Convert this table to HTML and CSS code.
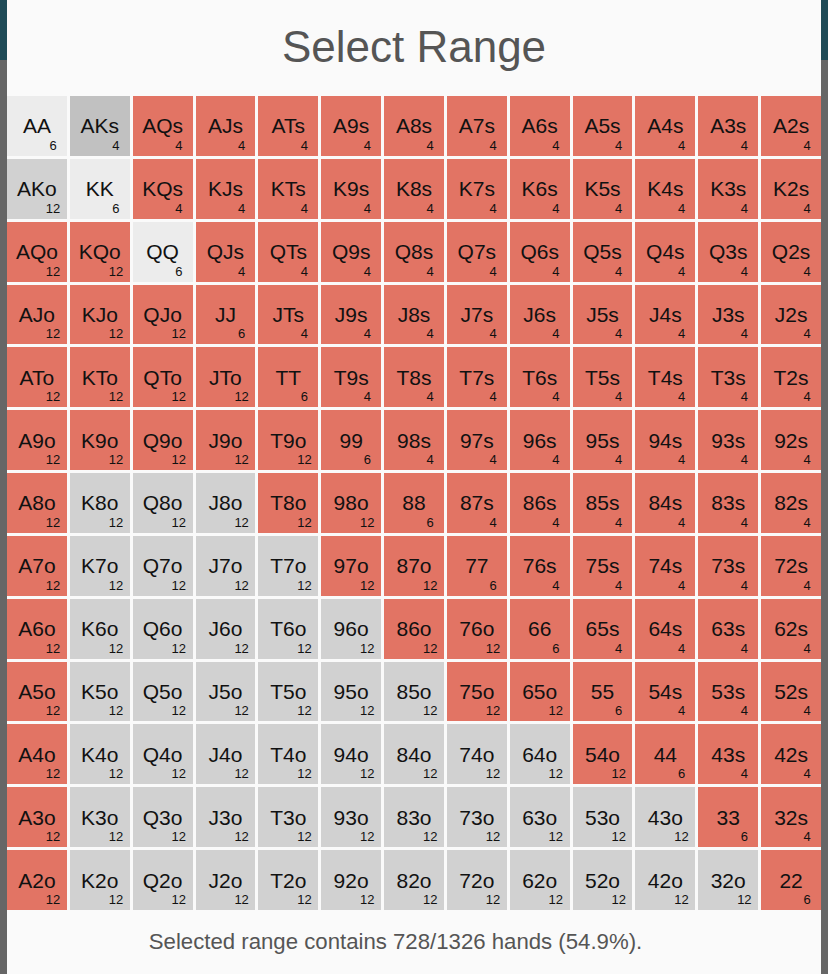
FILE: index.html
```html
<!DOCTYPE html>
<html>
<head>
<meta charset="utf-8">
<title>Select Range</title>
<link rel="stylesheet" href="styles.css">
</head>
<body>
<div class="screen">
  <div class="strip"><div class="strip-top"></div></div>
  <main class="modal">
    <h1 class="title">Select Range</h1>
    <div class="grid">
      <div class="cell p"><span class="h">AA</span><span class="n">6</span></div>
      <div class="cell s"><span class="h">AKs</span><span class="n">4</span></div>
      <div class="cell r"><span class="h">AQs</span><span class="n">4</span></div>
      <div class="cell r"><span class="h">AJs</span><span class="n">4</span></div>
      <div class="cell r"><span class="h">ATs</span><span class="n">4</span></div>
      <div class="cell r"><span class="h">A9s</span><span class="n">4</span></div>
      <div class="cell r"><span class="h">A8s</span><span class="n">4</span></div>
      <div class="cell r"><span class="h">A7s</span><span class="n">4</span></div>
      <div class="cell r"><span class="h">A6s</span><span class="n">4</span></div>
      <div class="cell r"><span class="h">A5s</span><span class="n">4</span></div>
      <div class="cell r"><span class="h">A4s</span><span class="n">4</span></div>
      <div class="cell r"><span class="h">A3s</span><span class="n">4</span></div>
      <div class="cell r"><span class="h">A2s</span><span class="n">4</span></div>

      <div class="cell o"><span class="h">AKo</span><span class="n">12</span></div>
      <div class="cell p"><span class="h">KK</span><span class="n">6</span></div>
      <div class="cell r"><span class="h">KQs</span><span class="n">4</span></div>
      <div class="cell r"><span class="h">KJs</span><span class="n">4</span></div>
      <div class="cell r"><span class="h">KTs</span><span class="n">4</span></div>
      <div class="cell r"><span class="h">K9s</span><span class="n">4</span></div>
      <div class="cell r"><span class="h">K8s</span><span class="n">4</span></div>
      <div class="cell r"><span class="h">K7s</span><span class="n">4</span></div>
      <div class="cell r"><span class="h">K6s</span><span class="n">4</span></div>
      <div class="cell r"><span class="h">K5s</span><span class="n">4</span></div>
      <div class="cell r"><span class="h">K4s</span><span class="n">4</span></div>
      <div class="cell r"><span class="h">K3s</span><span class="n">4</span></div>
      <div class="cell r"><span class="h">K2s</span><span class="n">4</span></div>

      <div class="cell r"><span class="h">AQo</span><span class="n">12</span></div>
      <div class="cell r"><span class="h">KQo</span><span class="n">12</span></div>
      <div class="cell p"><span class="h">QQ</span><span class="n">6</span></div>
      <div class="cell r"><span class="h">QJs</span><span class="n">4</span></div>
      <div class="cell r"><span class="h">QTs</span><span class="n">4</span></div>
      <div class="cell r"><span class="h">Q9s</span><span class="n">4</span></div>
      <div class="cell r"><span class="h">Q8s</span><span class="n">4</span></div>
      <div class="cell r"><span class="h">Q7s</span><span class="n">4</span></div>
      <div class="cell r"><span class="h">Q6s</span><span class="n">4</span></div>
      <div class="cell r"><span class="h">Q5s</span><span class="n">4</span></div>
      <div class="cell r"><span class="h">Q4s</span><span class="n">4</span></div>
      <div class="cell r"><span class="h">Q3s</span><span class="n">4</span></div>
      <div class="cell r"><span class="h">Q2s</span><span class="n">4</span></div>

      <div class="cell r"><span class="h">AJo</span><span class="n">12</span></div>
      <div class="cell r"><span class="h">KJo</span><span class="n">12</span></div>
      <div class="cell r"><span class="h">QJo</span><span class="n">12</span></div>
      <div class="cell r"><span class="h">JJ</span><span class="n">6</span></div>
      <div class="cell r"><span class="h">JTs</span><span class="n">4</span></div>
      <div class="cell r"><span class="h">J9s</span><span class="n">4</span></div>
      <div class="cell r"><span class="h">J8s</span><span class="n">4</span></div>
      <div class="cell r"><span class="h">J7s</span><span class="n">4</span></div>
      <div class="cell r"><span class="h">J6s</span><span class="n">4</span></div>
      <div class="cell r"><span class="h">J5s</span><span class="n">4</span></div>
      <div class="cell r"><span class="h">J4s</span><span class="n">4</span></div>
      <div class="cell r"><span class="h">J3s</span><span class="n">4</span></div>
      <div class="cell r"><span class="h">J2s</span><span class="n">4</span></div>

      <div class="cell r"><span class="h">ATo</span><span class="n">12</span></div>
      <div class="cell r"><span class="h">KTo</span><span class="n">12</span></div>
      <div class="cell r"><span class="h">QTo</span><span class="n">12</span></div>
      <div class="cell r"><span class="h">JTo</span><span class="n">12</span></div>
      <div class="cell r"><span class="h">TT</span><span class="n">6</span></div>
      <div class="cell r"><span class="h">T9s</span><span class="n">4</span></div>
      <div class="cell r"><span class="h">T8s</span><span class="n">4</span></div>
      <div class="cell r"><span class="h">T7s</span><span class="n">4</span></div>
      <div class="cell r"><span class="h">T6s</span><span class="n">4</span></div>
      <div class="cell r"><span class="h">T5s</span><span class="n">4</span></div>
      <div class="cell r"><span class="h">T4s</span><span class="n">4</span></div>
      <div class="cell r"><span class="h">T3s</span><span class="n">4</span></div>
      <div class="cell r"><span class="h">T2s</span><span class="n">4</span></div>

      <div class="cell r"><span class="h">A9o</span><span class="n">12</span></div>
      <div class="cell r"><span class="h">K9o</span><span class="n">12</span></div>
      <div class="cell r"><span class="h">Q9o</span><span class="n">12</span></div>
      <div class="cell r"><span class="h">J9o</span><span class="n">12</span></div>
      <div class="cell r"><span class="h">T9o</span><span class="n">12</span></div>
      <div class="cell r"><span class="h">99</span><span class="n">6</span></div>
      <div class="cell r"><span class="h">98s</span><span class="n">4</span></div>
      <div class="cell r"><span class="h">97s</span><span class="n">4</span></div>
      <div class="cell r"><span class="h">96s</span><span class="n">4</span></div>
      <div class="cell r"><span class="h">95s</span><span class="n">4</span></div>
      <div class="cell r"><span class="h">94s</span><span class="n">4</span></div>
      <div class="cell r"><span class="h">93s</span><span class="n">4</span></div>
      <div class="cell r"><span class="h">92s</span><span class="n">4</span></div>

      <div class="cell r"><span class="h">A8o</span><span class="n">12</span></div>
      <div class="cell o"><span class="h">K8o</span><span class="n">12</span></div>
      <div class="cell o"><span class="h">Q8o</span><span class="n">12</span></div>
      <div class="cell o"><span class="h">J8o</span><span class="n">12</span></div>
      <div class="cell r"><span class="h">T8o</span><span class="n">12</span></div>
      <div class="cell r"><span class="h">98o</span><span class="n">12</span></div>
      <div class="cell r"><span class="h">88</span><span class="n">6</span></div>
      <div class="cell r"><span class="h">87s</span><span class="n">4</span></div>
      <div class="cell r"><span class="h">86s</span><span class="n">4</span></div>
      <div class="cell r"><span class="h">85s</span><span class="n">4</span></div>
      <div class="cell r"><span class="h">84s</span><span class="n">4</span></div>
      <div class="cell r"><span class="h">83s</span><span class="n">4</span></div>
      <div class="cell r"><span class="h">82s</span><span class="n">4</span></div>

      <div class="cell r"><span class="h">A7o</span><span class="n">12</span></div>
      <div class="cell o"><span class="h">K7o</span><span class="n">12</span></div>
      <div class="cell o"><span class="h">Q7o</span><span class="n">12</span></div>
      <div class="cell o"><span class="h">J7o</span><span class="n">12</span></div>
      <div class="cell o"><span class="h">T7o</span><span class="n">12</span></div>
      <div class="cell r"><span class="h">97o</span><span class="n">12</span></div>
      <div class="cell r"><span class="h">87o</span><span class="n">12</span></div>
      <div class="cell r"><span class="h">77</span><span class="n">6</span></div>
      <div class="cell r"><span class="h">76s</span><span class="n">4</span></div>
      <div class="cell r"><span class="h">75s</span><span class="n">4</span></div>
      <div class="cell r"><span class="h">74s</span><span class="n">4</span></div>
      <div class="cell r"><span class="h">73s</span><span class="n">4</span></div>
      <div class="cell r"><span class="h">72s</span><span class="n">4</span></div>

      <div class="cell r"><span class="h">A6o</span><span class="n">12</span></div>
      <div class="cell o"><span class="h">K6o</span><span class="n">12</span></div>
      <div class="cell o"><span class="h">Q6o</span><span class="n">12</span></div>
      <div class="cell o"><span class="h">J6o</span><span class="n">12</span></div>
      <div class="cell o"><span class="h">T6o</span><span class="n">12</span></div>
      <div class="cell o"><span class="h">96o</span><span class="n">12</span></div>
      <div class="cell r"><span class="h">86o</span><span class="n">12</span></div>
      <div class="cell r"><span class="h">76o</span><span class="n">12</span></div>
      <div class="cell r"><span class="h">66</span><span class="n">6</span></div>
      <div class="cell r"><span class="h">65s</span><span class="n">4</span></div>
      <div class="cell r"><span class="h">64s</span><span class="n">4</span></div>
      <div class="cell r"><span class="h">63s</span><span class="n">4</span></div>
      <div class="cell r"><span class="h">62s</span><span class="n">4</span></div>

      <div class="cell r"><span class="h">A5o</span><span class="n">12</span></div>
      <div class="cell o"><span class="h">K5o</span><span class="n">12</span></div>
      <div class="cell o"><span class="h">Q5o</span><span class="n">12</span></div>
      <div class="cell o"><span class="h">J5o</span><span class="n">12</span></div>
      <div class="cell o"><span class="h">T5o</span><span class="n">12</span></div>
      <div class="cell o"><span class="h">95o</span><span class="n">12</span></div>
      <div class="cell o"><span class="h">85o</span><span class="n">12</span></div>
      <div class="cell r"><span class="h">75o</span><span class="n">12</span></div>
      <div class="cell r"><span class="h">65o</span><span class="n">12</span></div>
      <div class="cell r"><span class="h">55</span><span class="n">6</span></div>
      <div class="cell r"><span class="h">54s</span><span class="n">4</span></div>
      <div class="cell r"><span class="h">53s</span><span class="n">4</span></div>
      <div class="cell r"><span class="h">52s</span><span class="n">4</span></div>

      <div class="cell r"><span class="h">A4o</span><span class="n">12</span></div>
      <div class="cell o"><span class="h">K4o</span><span class="n">12</span></div>
      <div class="cell o"><span class="h">Q4o</span><span class="n">12</span></div>
      <div class="cell o"><span class="h">J4o</span><span class="n">12</span></div>
      <div class="cell o"><span class="h">T4o</span><span class="n">12</span></div>
      <div class="cell o"><span class="h">94o</span><span class="n">12</span></div>
      <div class="cell o"><span class="h">84o</span><span class="n">12</span></div>
      <div class="cell o"><span class="h">74o</span><span class="n">12</span></div>
      <div class="cell o"><span class="h">64o</span><span class="n">12</span></div>
      <div class="cell r"><span class="h">54o</span><span class="n">12</span></div>
      <div class="cell r"><span class="h">44</span><span class="n">6</span></div>
      <div class="cell r"><span class="h">43s</span><span class="n">4</span></div>
      <div class="cell r"><span class="h">42s</span><span class="n">4</span></div>

      <div class="cell r"><span class="h">A3o</span><span class="n">12</span></div>
      <div class="cell o"><span class="h">K3o</span><span class="n">12</span></div>
      <div class="cell o"><span class="h">Q3o</span><span class="n">12</span></div>
      <div class="cell o"><span class="h">J3o</span><span class="n">12</span></div>
      <div class="cell o"><span class="h">T3o</span><span class="n">12</span></div>
      <div class="cell o"><span class="h">93o</span><span class="n">12</span></div>
      <div class="cell o"><span class="h">83o</span><span class="n">12</span></div>
      <div class="cell o"><span class="h">73o</span><span class="n">12</span></div>
      <div class="cell o"><span class="h">63o</span><span class="n">12</span></div>
      <div class="cell o"><span class="h">53o</span><span class="n">12</span></div>
      <div class="cell o"><span class="h">43o</span><span class="n">12</span></div>
      <div class="cell r"><span class="h">33</span><span class="n">6</span></div>
      <div class="cell r"><span class="h">32s</span><span class="n">4</span></div>

      <div class="cell r"><span class="h">A2o</span><span class="n">12</span></div>
      <div class="cell o"><span class="h">K2o</span><span class="n">12</span></div>
      <div class="cell o"><span class="h">Q2o</span><span class="n">12</span></div>
      <div class="cell o"><span class="h">J2o</span><span class="n">12</span></div>
      <div class="cell o"><span class="h">T2o</span><span class="n">12</span></div>
      <div class="cell o"><span class="h">92o</span><span class="n">12</span></div>
      <div class="cell o"><span class="h">82o</span><span class="n">12</span></div>
      <div class="cell o"><span class="h">72o</span><span class="n">12</span></div>
      <div class="cell o"><span class="h">62o</span><span class="n">12</span></div>
      <div class="cell o"><span class="h">52o</span><span class="n">12</span></div>
      <div class="cell o"><span class="h">42o</span><span class="n">12</span></div>
      <div class="cell o"><span class="h">32o</span><span class="n">12</span></div>
      <div class="cell r"><span class="h">22</span><span class="n">6</span></div>
    </div>
    <p class="summary">Selected range contains 728/1326 hands (54.9%).</p>
  </main>
  <div class="strip"><div class="strip-top"></div></div>
</div>
</body>
</html>
```
FILE: styles.css
```css
* { box-sizing: border-box; }
html, body {
  margin: 0;
  padding: 0;
  height: 100%;
  background: #666666;
  font-family: "Liberation Sans", Arial, Helvetica, sans-serif;
}
.screen {
  display: flex;
  height: 974px;
  width: 828px;
  overflow: hidden;
}
.strip {
  width: 7px;
  flex: 0 0 7px;
  background: #666666;
}
.strip-top {
  height: 60px;
  background: #1f4b57;
}
.modal {
  flex: 1;
  background: #fafafa;
  display: flex;
  flex-direction: column;
}
.title {
  margin: 0;
  height: 96px;
  display: flex;
  align-items: center;
  justify-content: center;
  font-weight: normal;
  font-size: 44px;
  color: #555555;
  padding-bottom: 2px;
}
.grid {
  display: grid;
  grid-template-columns: repeat(13, 1fr);
  grid-template-rows: repeat(13, 1fr);
  gap: 3px;
  width: 814px;
  height: 814px;
}
.cell {
  position: relative;
  display: flex;
  align-items: center;
  justify-content: center;
  color: #111111;
}
.cell.r { background: #e27464; }
.cell.p { background: #ececec; }
.cell.s { background: #c1c1c1; }
.cell.o { background: #d1d1d1; }
.h {
  font-size: 21px;
  line-height: 1;
}
.n {
  position: absolute;
  right: 0;
  bottom: 4px;
  width: 46%;
  text-align: center;
  font-size: 13px;
  line-height: 13px;
}
.summary {
  margin: 0;
  flex: 1;
  display: flex;
  align-items: center;
  justify-content: center;
  font-size: 22.2px;
  color: #555555;
  padding-right: 37px;
  padding-bottom: 1px;
}
```
